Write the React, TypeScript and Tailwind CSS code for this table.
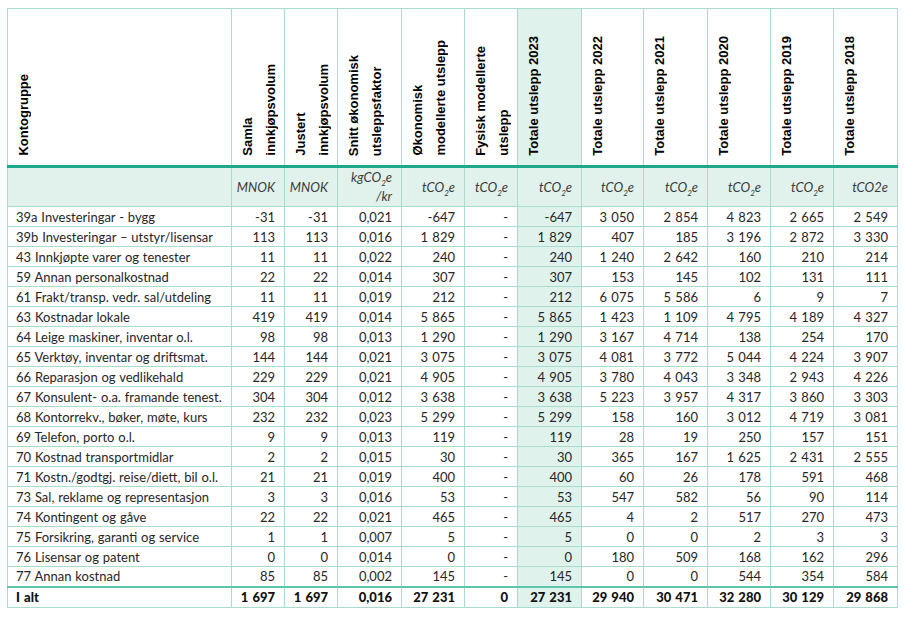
const headers: string[][] = [
  ["Kontogruppe"],
  ["Samla", "innkjøpsvolum"],
  ["Justert", "innkjøpsvolum"],
  ["Snitt økonomisk", "utsleppsfaktor"],
  ["Økonomisk", "modellerte utslepp"],
  ["Fysisk modellerte", "utslepp"],
  ["Totale utslepp 2023"],
  ["Totale utslepp 2022"],
  ["Totale utslepp 2021"],
  ["Totale utslepp 2020"],
  ["Totale utslepp 2019"],
  ["Totale utslepp 2018"],
];

const widths = [224, 53, 53, 64, 63, 53, 64, 62, 64, 63, 63, 64];

const rows: string[][] = [
  ["39a Investeringar - bygg", "-31", "-31", "0,021", "-647", "-", "-647", "3 050", "2 854", "4 823", "2 665", "2 549"],
  ["39b Investeringar – utstyr/lisensar", "113", "113", "0,016", "1 829", "-", "1 829", "407", "185", "3 196", "2 872", "3 330"],
  ["43 Innkjøpte varer og tenester", "11", "11", "0,022", "240", "-", "240", "1 240", "2 642", "160", "210", "214"],
  ["59 Annan personalkostnad", "22", "22", "0,014", "307", "-", "307", "153", "145", "102", "131", "111"],
  ["61 Frakt/transp. vedr. sal/utdeling", "11", "11", "0,019", "212", "-", "212", "6 075", "5 586", "6", "9", "7"],
  ["63 Kostnadar lokale", "419", "419", "0,014", "5 865", "-", "5 865", "1 423", "1 109", "4 795", "4 189", "4 327"],
  ["64 Leige maskiner, inventar o.l.", "98", "98", "0,013", "1 290", "-", "1 290", "3 167", "4 714", "138", "254", "170"],
  ["65 Verktøy, inventar og driftsmat.", "144", "144", "0,021", "3 075", "-", "3 075", "4 081", "3 772", "5 044", "4 224", "3 907"],
  ["66 Reparasjon og vedlikehald", "229", "229", "0,021", "4 905", "-", "4 905", "3 780", "4 043", "3 348", "2 943", "4 226"],
  ["67 Konsulent- o.a. framande tenest.", "304", "304", "0,012", "3 638", "-", "3 638", "5 223", "3 957", "4 317", "3 860", "3 303"],
  ["68 Kontorrekv., bøker, møte, kurs", "232", "232", "0,023", "5 299", "-", "5 299", "158", "160", "3 012", "4 719", "3 081"],
  ["69 Telefon, porto o.l.", "9", "9", "0,013", "119", "-", "119", "28", "19", "250", "157", "151"],
  ["70 Kostnad transportmidlar", "2", "2", "0,015", "30", "-", "30", "365", "167", "1 625", "2 431", "2 555"],
  ["71 Kostn./godtgj. reise/diett, bil o.l.", "21", "21", "0,019", "400", "-", "400", "60", "26", "178", "591", "468"],
  ["73 Sal, reklame og representasjon", "3", "3", "0,016", "53", "-", "53", "547", "582", "56", "90", "114"],
  ["74 Kontingent og gåve", "22", "22", "0,021", "465", "-", "465", "4", "2", "517", "270", "473"],
  ["75 Forsikring, garanti og service", "1", "1", "0,007", "5", "-", "5", "0", "0", "2", "3", "3"],
  ["76 Lisensar og patent", "0", "0", "0,014", "0", "-", "0", "180", "509", "168", "162", "296"],
  ["77 Annan kostnad", "85", "85", "0,002", "145", "-", "145", "0", "0", "544", "354", "584"],
];

const total = ["I alt", "1 697", "1 697", "0,016", "27 231", "0", "27 231", "29 940", "30 471", "32 280", "30 129", "29 868"];

function Tco2() {
  return (
    <>
      tCO<sub className="text-[8px] align-[-2px]">2</sub>e
    </>
  );
}

const units = [
  null,
  <>MNOK</>,
  <>MNOK</>,
  <>
    kgCO<sub className="text-[8px] align-[-2px]">2</sub>e
    <br />/kr
  </>,
  <Tco2 />,
  <Tco2 />,
  <Tco2 />,
  <Tco2 />,
  <Tco2 />,
  <Tco2 />,
  <Tco2 />,
  <>tCO2e</>,
];

export default function App() {
  return (
    <div className="bg-white min-h-[617px] pl-[7px] pt-[8px] font-['Lato',sans-serif] text-[#262626]">
      <table className="table-fixed border-collapse w-[890px]">
        <colgroup>
          {widths.map((w, i) => (
            <col key={i} style={{ width: w }} />
          ))}
        </colgroup>
        <thead>
          <tr>
            {headers.map((lines, i) => (
              <th
                key={i}
                className={`h-[158px] align-bottom text-left px-[4px] pb-[9px] border border-[#a9dccf] border-b-[3px] border-b-[#1ea88a] ${
                  i === 6 ? "bg-[#e0f2ec]" : "bg-white"
                }`}
              >
                <div className="[writing-mode:vertical-rl] rotate-180 font-['Liberation_Sans',Arial,sans-serif] font-bold text-[13px] leading-[23px] text-black whitespace-nowrap">
                  {lines.map((l, j) => (
                    <div key={j}>{l}</div>
                  ))}
                </div>
              </th>
            ))}
          </tr>
        </thead>
        <tbody>
          <tr>
            {units.map((u, i) => (
              <td
                key={i}
                className="h-[38px] bg-[#e1f2ed] border border-[#a9dccf] text-right pr-[9px] italic text-[13px] leading-[19px] text-[#3a3a3a]"
              >
                {u}
              </td>
            ))}
          </tr>
          {rows.map((r, ri) => (
            <tr key={ri}>
              {r.map((c, ci) => (
                <td
                  key={ci}
                  className={`h-[20px] py-0 border border-[#a9dccf] text-[13px] leading-[18px] whitespace-nowrap ${
                    ci === 0 ? "text-left pl-[8px] [word-spacing:0.5px]" : "text-right pr-[9px] [word-spacing:1px]"
                  } ${ci === 6 ? "bg-[#e0f2ec]" : ""}`}
                >
                  {c}
                </td>
              ))}
            </tr>
          ))}
          <tr>
            {total.map((c, ci) => (
              <td
                key={ci}
                className={`h-[21px] py-0 border border-[#a9dccf] border-t-2 border-t-[#5ec4aa] text-[13px] font-black leading-[18px] whitespace-nowrap text-[#111] [word-spacing:1px] ${
                  ci === 0 ? "text-left pl-[8px]" : "text-right pr-[9px]"
                } ${ci === 6 ? "bg-[#e0f2ec]" : ""}`}
              >
                {c}
              </td>
            ))}
          </tr>
        </tbody>
      </table>
    </div>
  );
}
